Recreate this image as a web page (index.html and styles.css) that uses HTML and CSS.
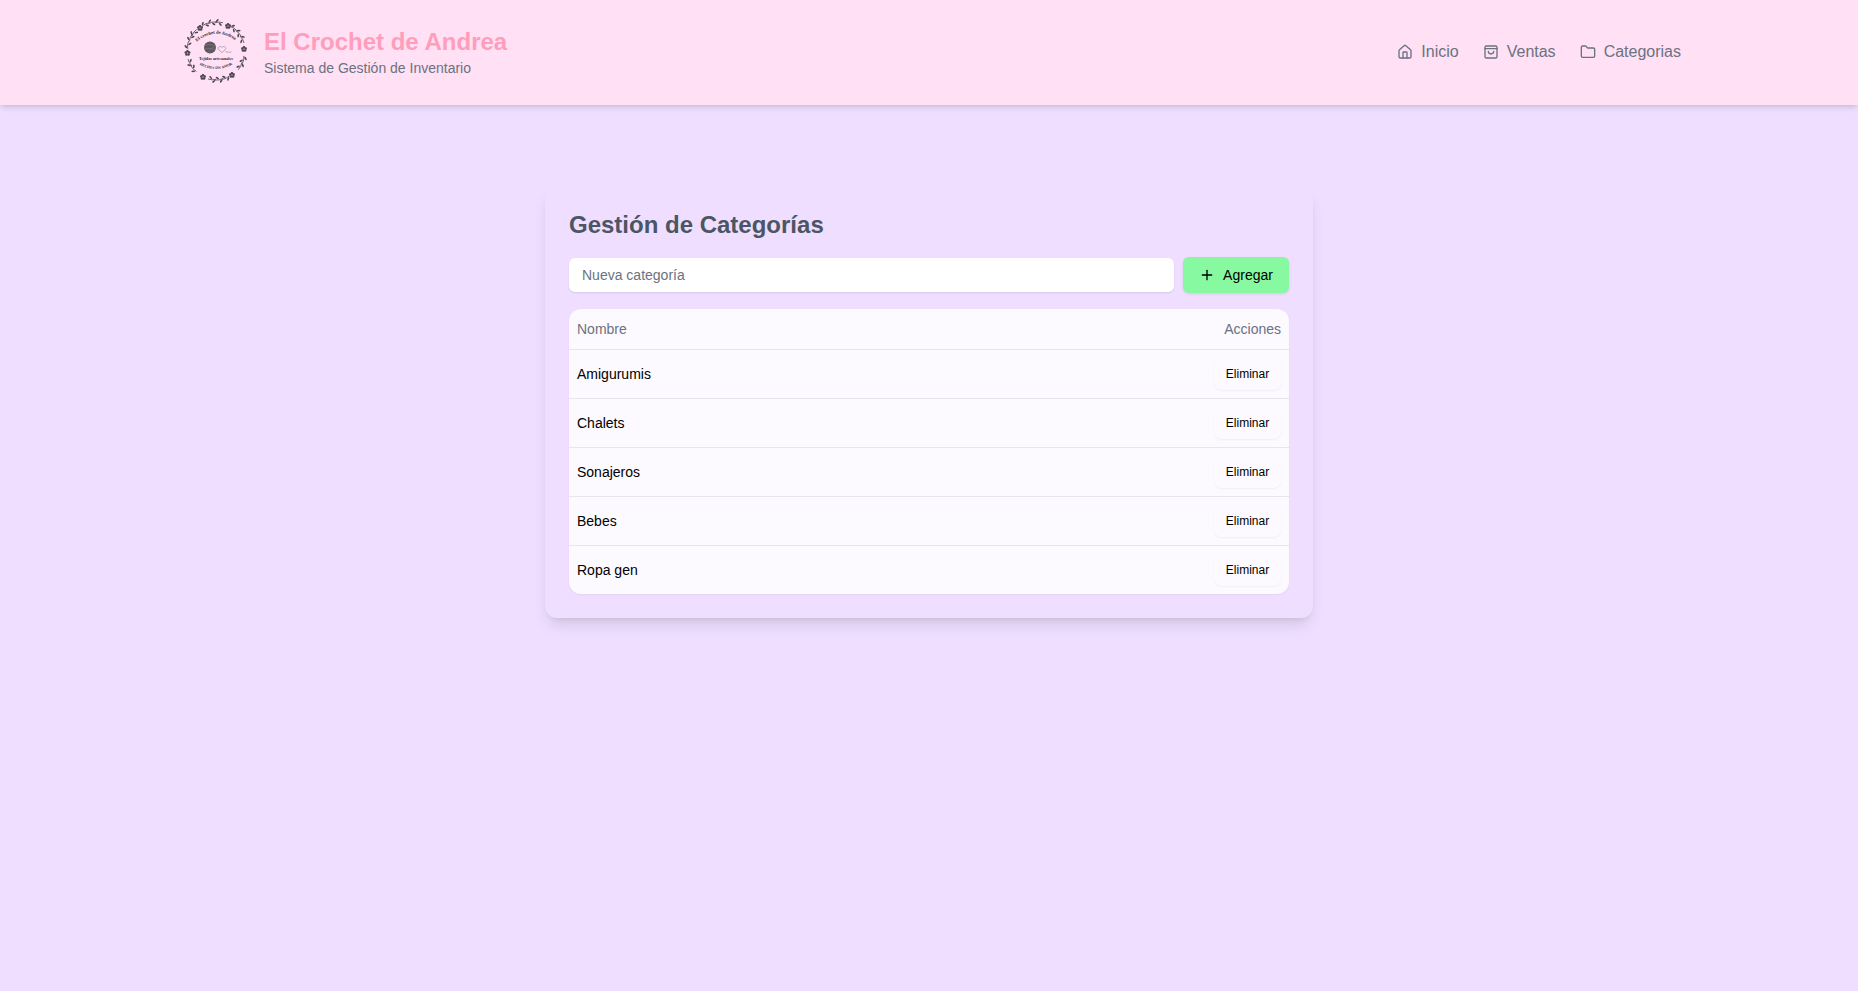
FILE: index.html
```html
<!DOCTYPE html>
<html lang="es">
<head>
<meta charset="utf-8">
<title>El Crochet de Andrea</title>
<link rel="stylesheet" href="styles.css">
</head>
<body>
<header class="header">
  <div class="header-inner">
    <div class="brand">
      <svg class="logo" viewBox="0 0 66 66" width="66" height="66" fill="none" stroke="#4d4550">
        <defs>
          <g id="sprig">
            <path d="M29 5Q33 3.200 37 4.200" stroke-width=".75"/>
            <ellipse cx="31" cy="2.600" rx="1.900" ry=".85" transform="rotate(-50 31 2.600)" fill="#4d4550" stroke="none"/>
            <ellipse cx="34.500" cy="6" rx="1.900" ry=".85" transform="rotate(40 34.500 6)" fill="#4d4550" stroke="none"/>
          </g>
          <g id="flower">
            <circle cx="0" cy="-1.800" r="1.300"/><circle cx="1.700" cy="-.55" r="1.300"/><circle cx="1.050" cy="1.450" r="1.300"/><circle cx="-1.050" cy="1.450" r="1.300"/><circle cx="-1.700" cy="-.55" r="1.300"/>
          </g>
          <path id="arc-top" d="M11 27A29 29 0 0 1 55 25"/>
          <path id="arc-bottom" d="M12 44Q32 58 54 44"/>
        </defs>
        <g>
          <use href="#sprig" transform="rotate(-62 33 33)"/>
          <use href="#sprig" transform="rotate(-50 33 33)"/>
          <use href="#sprig" transform="rotate(-22 33 33)"/>
          <use href="#sprig" transform="rotate(-8 33 33)"/>
          <use href="#sprig" transform="rotate(6 33 33)"/>
          <use href="#sprig" transform="rotate(38 33 33)"/>
          <use href="#sprig" transform="rotate(52 33 33)"/>
          <use href="#sprig" transform="rotate(66 33 33)"/>
          <use href="#sprig" transform="rotate(108 33 33)"/>
          <use href="#sprig" transform="rotate(122 33 33)"/>
          <use href="#sprig" transform="rotate(160 33 33)"/>
          <use href="#sprig" transform="rotate(174 33 33)"/>
          <use href="#sprig" transform="rotate(188 33 33)"/>
          <use href="#sprig" transform="rotate(232 33 33)"/>
          <use href="#sprig" transform="rotate(246 33 33)"/>
          <use href="#sprig" transform="rotate(282 33 33)"/>
        </g>
        <g fill="#4d4550" stroke="none">
          <use href="#flower" x="17" y="10"/><use href="#flower" x="45" y="8"/>
          <use href="#flower" x="61" y="31"/><use href="#flower" x="49" y="57"/>
          <use href="#flower" x="20" y="59"/><use href="#flower" x="4.500" y="35"/>
        </g>
        <circle cx="27" cy="29.500" r="6" fill="#5f5760" stroke="none"/>
        <path d="M22.500 27q4.500-2 9 1M22 31q5-1.500 10 .5M24 35q3-4 7-6" stroke="#8b838c" stroke-width=".5"/>
        <path d="M39 29.500c-1.700-2.400-5-.2-3.400 2.100l3.400 3 3.400-3c1.600-2.300-1.700-4.500-3.400-2.100zM42.500 33.500c2 1 4 1 6 .3" stroke-width=".6" stroke="#8d7f8d"/>
        <text class="logo-text" x="33" y="41.500" text-anchor="middle" font-size="4.200">Tejidos artesanales</text>
        <text class="logo-text" font-size="4.600"><textPath href="#arc-top" startOffset="50%" text-anchor="middle">El crochet de Andrea</textPath></text>
        <text class="logo-text" font-size="3.600"><textPath href="#arc-bottom" startOffset="50%" text-anchor="middle">HECHO CON AMOR</textPath></text>
      </svg>
      <div class="brand-text">
        <h1 class="brand-title">El Crochet de Andrea</h1>
        <p class="brand-sub">Sistema de Gestión de Inventario</p>
      </div>
    </div>
    <nav class="nav">
      <a class="nav-link" href="#">
        <svg class="nav-icon" viewBox="0 0 24 24" fill="none" stroke="currentColor" stroke-width="2" stroke-linecap="round" stroke-linejoin="round"><path d="M15 21v-8a1 1 0 0 0-1-1h-4a1 1 0 0 0-1 1v8"/><path d="M3 10a2 2 0 0 1 .709-1.528l7-6a2 2 0 0 1 2.582 0l7 6A2 2 0 0 1 21 10v9a2 2 0 0 1-2 2H5a2 2 0 0 1-2-2z"/></svg>
        <span>Inicio</span>
      </a>
      <a class="nav-link" href="#">
        <svg class="nav-icon" viewBox="0 0 24 24" fill="none" stroke="currentColor" stroke-width="2" stroke-linecap="round" stroke-linejoin="round"><rect x="3" y="3" width="18" height="18" rx="2"/><path d="M3 7h18"/><path d="M16 11a4 4 0 0 1-8 0"/></svg>
        <span>Ventas</span>
      </a>
      <a class="nav-link" href="#">
        <svg class="nav-icon" viewBox="0 0 24 24" fill="none" stroke="currentColor" stroke-width="2" stroke-linecap="round" stroke-linejoin="round"><path d="M20 20a2 2 0 0 0 2-2V8a2 2 0 0 0-2-2h-7.900a2 2 0 0 1-1.690-.9L9.600 3.900A2 2 0 0 0 7.930 3H4a2 2 0 0 0-2 2v13a2 2 0 0 0 2 2Z"/></svg>
        <span>Categorias</span>
      </a>
    </nav>
  </div>
</header>
<main class="main">
  <section class="card">
    <h2 class="card-title">Gestión de Categorías</h2>
    <form class="add-form">
      <input class="add-input" type="text" placeholder="Nueva categoría">
      <button class="add-btn" type="button">
        <svg class="add-icon" viewBox="0 0 24 24" fill="none" stroke="currentColor" stroke-width="2" stroke-linecap="round" stroke-linejoin="round"><path d="M5 12h14"/><path d="M12 5v14"/></svg>
        <span>Agregar</span>
      </button>
    </form>
    <div class="table">
      <div class="row row-head"><span>Nombre</span><span>Acciones</span></div>
      <div class="row"><span>Amigurumis</span><button class="del-btn" type="button">Eliminar</button></div>
      <div class="row"><span>Chalets</span><button class="del-btn" type="button">Eliminar</button></div>
      <div class="row"><span>Sonajeros</span><button class="del-btn" type="button">Eliminar</button></div>
      <div class="row"><span>Bebes</span><button class="del-btn" type="button">Eliminar</button></div>
      <div class="row"><span>Ropa gen</span><button class="del-btn" type="button">Eliminar</button></div>
    </div>
  </section>
</main>
</body>
</html>
```
FILE: styles.css
```css
* { box-sizing: border-box; }
html, body { margin: 0; }
body {
  min-height: 991px;
  background: #efdeff;
  font-family: "Liberation Sans", Arial, sans-serif;
  color: #000;
}
.header {
  height: 105px;
  background: #ffe0f5;
  box-shadow: 0 4px 6px -1px rgba(0, 0, 0, .1), 0 2px 4px -2px rgba(0, 0, 0, .1);
}
.header-inner {
  height: 100%;
  padding: 0 177px 2px 183px;
  display: flex;
  align-items: center;
  justify-content: space-between;
}
.brand { display: flex; align-items: center; gap: 15px; margin-top: -1px; }
.logo { display: block; }
.logo-text { font-family: "Liberation Serif", serif; font-weight: 700; fill: #2e2a30; stroke: none; }
.brand-text { padding-top: 1px; }
.brand-title { margin: 0; font-size: 24px; line-height: 32px; font-weight: 700; color: #ff9ebb; }
.brand-sub { margin: 0; font-size: 14px; line-height: 20px; color: #6b7280; }
.nav { display: flex; gap: 24px; }
.nav-link { display: flex; align-items: center; gap: 8px; font-size: 16px; line-height: 24px; color: #6b7280; text-decoration: none; }
.nav-icon { width: 16px; height: 16px; }
.main { padding-top: 80px; display: flex; justify-content: center; }
.card {
  width: 768px;
  padding: 24px;
  border-radius: 12px;
  background: #efdeff;
  box-shadow: 0 10px 15px -3px rgba(0, 0, 0, .1), 0 4px 6px -4px rgba(0, 0, 0, .1);
}
.card-title { margin: 0 0 16px; font-size: 24px; line-height: 32px; font-weight: 700; color: #4b5563; }
.add-form { display: flex; gap: 9px; align-items: center; margin-bottom: 16px; }
.add-input {
  flex: 1;
  height: 34px;
  padding: 0 13px;
  border: 0;
  border-radius: 6px;
  background: #fff;
  font: 14px "Liberation Sans", Arial, sans-serif;
  box-shadow: 0 1px 2px rgba(0, 0, 0, .1);
}
.add-input::placeholder { color: #6b7280; opacity: 1; }
.add-btn {
  width: 106px;
  height: 36px;
  display: flex;
  align-items: center;
  justify-content: center;
  gap: 8px;
  padding: 0;
  border: 0;
  border-radius: 6px;
  background: #86f9a1;
  color: #000;
  font: 14px "Liberation Sans", Arial, sans-serif;
  box-shadow: 0 1px 3px rgba(0, 0, 0, .1);
}
.add-icon { width: 16px; height: 16px; }
.table { border-radius: 12px; overflow: hidden; background: #fcf9ff; box-shadow: 0 1px 2px rgba(0, 0, 0, .05); }
.row {
  height: 49px;
  padding: 0 8px;
  display: flex;
  align-items: center;
  justify-content: space-between;
  font-size: 14px;
  border-top: 1px solid #e9e5ee;
}
.row-head { height: 40px; border-top: 0; color: #6b7280; }
.del-btn {
  width: 67px;
  height: 32px;
  padding: 0;
  border: 0;
  border-radius: 8px;
  background: #fdfaff;
  color: #000;
  font: 12px "Liberation Sans", Arial, sans-serif;
  box-shadow: 0 1px 2px rgba(0, 0, 0, .05);
}
```
